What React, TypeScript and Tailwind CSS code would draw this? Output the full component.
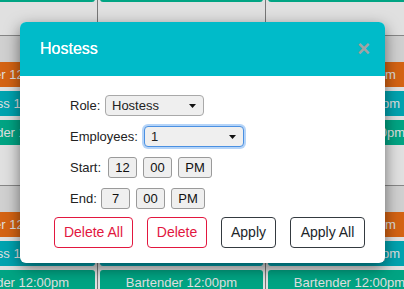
import React from "react";

const columns = [0, 1, 2];

const bars = [
  { label: "Server 12:00pm", color: "bg-[#f27116]" },
  { label: "Hostess 12:00pm", color: "bg-[#00bac8]" },
  { label: "Bartender 12:00pm", color: "bg-[#00bb96]" },
];

function Bar({ label, color }: { label: string; color: string }) {
  return (
    <div
      className={`mx-[2px] h-[25px] rounded-[3px] ${color} flex items-center justify-center text-[13px] text-white whitespace-nowrap overflow-hidden`}
    >
      {label}
    </div>
  );
}

function Arrow() {
  return (
    <svg width="7" height="4" viewBox="0 0 7 4" className="shrink-0">
      <path d="M0 0h7L3.5 4z" fill="#111" />
    </svg>
  );
}

function Box({ value, w }: { value: string; w: string }) {
  return (
    <div
      className={`${w} h-[21px] rounded-[3px] border border-[#9a9a9a] bg-[#efefef] flex items-center justify-center text-[13px] text-[#111]`}
    >
      {value}
    </div>
  );
}

export default function App() {
  return (
    <div className="relative w-[404px] h-[289px] overflow-hidden bg-white font-['Liberation_Sans',Arial,sans-serif]">
      {/* schedule behind the modal */}
      <div className="-ml-[70px] -mt-[23px] flex flex-col w-[504px]">
        <div className="flex border-b border-[#999]">
          {columns.map((c) => (
            <div key={c} className="shrink-0 w-[168px] h-[58px] border-r border-[#888]">
              <Bar label="Bartender 12:00pm" color="bg-[#00bb96]" />
            </div>
          ))}
        </div>
        <div className="flex bg-[#ededed]">
          {columns.map((c) => (
            <div key={c} className="shrink-0 w-[168px] h-[26px] border-r border-[#ddd]" />
          ))}
        </div>
        <div className="flex border-b border-[#999]">
          {columns.map((c) => (
            <div key={c} className="shrink-0 w-[168px] h-[123px] border-r border-[#888] flex flex-col gap-[4px]">
              {bars.map((b) => (
                <Bar key={b.label} label={b.label} color={b.color} />
              ))}
            </div>
          ))}
        </div>
        <div className="flex bg-[#ededed]">
          {columns.map((c) => (
            <div key={c} className="shrink-0 w-[168px] h-[26px] border-r border-[#ddd]" />
          ))}
        </div>
        <div className="flex">
          {columns.map((c) => (
            <div key={c} className="shrink-0 w-[168px] h-[123px] border-r border-[#888] flex flex-col gap-[4px]">
              {bars.map((b) => (
                <Bar key={b.label} label={b.label} color={b.color} />
              ))}
            </div>
          ))}
        </div>
      </div>

      <div className="absolute inset-0 bg-black/[0.12]" />

      {/* modal */}
      <div className="absolute left-[20px] top-[22px] w-[365px] rounded-[6px] bg-white overflow-hidden shadow-[0_5px_15px_rgba(0,0,0,0.5)]">
        <div className="h-[54px] bg-[#00bbc9] flex items-center justify-between pl-[20px] pr-[15px]">
          <span className="text-[16px] text-white [text-shadow:0_0_0.4px_#fff]">Hostess</span>
          <span className="text-[22px] font-bold leading-none text-[#a3a3a3]">×</span>
        </div>

        <div className="pt-[19px] pb-[15px] text-[13px] text-[#222]">
          <div className="pl-[50px] flex flex-col gap-[10px]">
            <div className="flex items-center h-[21px]">
              <span className="shrink-0 whitespace-nowrap w-[35px]">Role:</span>
              <div className="w-[99px] h-[21px] rounded-[4px] border border-[#a9a9a9] bg-[#efefef] flex items-center justify-between pl-[6px] pr-[7px]">
                <span>Hostess</span>
                <Arrow />
              </div>
            </div>
            <div className="flex items-center h-[21px]">
              <span className="shrink-0 whitespace-nowrap w-[74px]">Employees:</span>
              <div className="w-[100px] h-[21px] rounded-[4px] border border-[#4a90e2] bg-[#efefef] shadow-[0_0_0_2px_rgba(90,160,240,0.45)] flex items-center justify-between pl-[6px] pr-[7px]">
                <span>1</span>
                <Arrow />
              </div>
            </div>
            <div className="flex items-center h-[21px]">
              <span className="shrink-0 whitespace-nowrap w-[38px]">Start:</span>
              <div className="flex gap-[6px]">
                <Box value="12" w="w-[29px]" />
                <Box value="00" w="w-[29px]" />
                <Box value="PM" w="w-[34px]" />
              </div>
            </div>
            <div className="flex items-center h-[21px]">
              <span className="shrink-0 whitespace-nowrap w-[31px]">End:</span>
              <div className="flex gap-[6px]">
                <Box value="7" w="w-[29px]" />
                <Box value="00" w="w-[29px]" />
                <Box value="PM" w="w-[34px]" />
              </div>
            </div>
          </div>

          <div className="mt-[8px] pr-[20px] flex justify-end gap-[14px] text-[14px]">
            <button className="w-[79px] h-[31px] rounded-[4px] border border-[#e2173f] text-[#e2173f]">
              Delete All
            </button>
            <button className="w-[60px] h-[31px] rounded-[4px] border border-[#e2173f] text-[#e2173f]">
              Delete
            </button>
            <button className="w-[55px] h-[31px] rounded-[4px] border border-[#343a40] text-[#212529]">
              Apply
            </button>
            <button className="w-[75px] h-[31px] rounded-[4px] border border-[#343a40] text-[#212529]">
              Apply All
            </button>
          </div>
        </div>
      </div>
    </div>
  );
}
